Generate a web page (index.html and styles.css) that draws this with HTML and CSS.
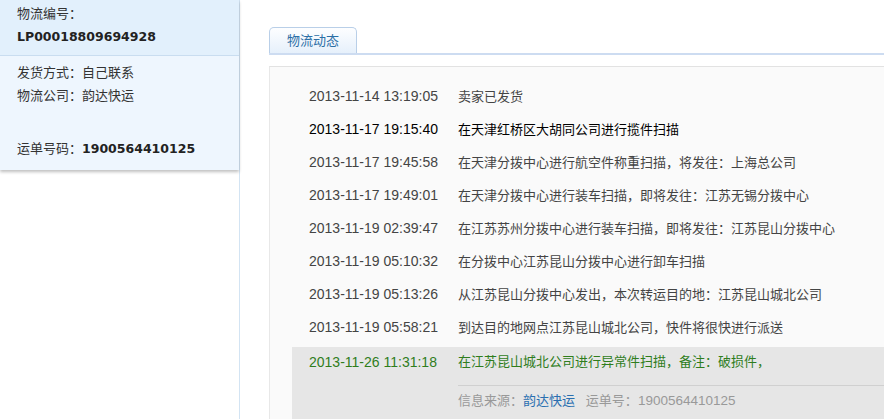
FILE: index.html
```html
<!DOCTYPE html>
<html lang="zh-CN">
<head>
    <meta charset="UTF-8">
    <meta name="viewport" content="width=device-width, initial-scale=1.0">
    <title>物流详情</title>
    <link rel="stylesheet" href="styles.css">
</head>
<body>
    <div class="page">
        <div class="sidebar">
            <div class="info-box">
                <div class="info-head">
                    <div>物流编号：</div>
                    <div class="num">LP00018809694928</div>
                </div>
                <div class="info-body">
                    <div>发货方式：自己联系</div>
                    <div>物流公司：韵达快运</div>
                    <div class="blank"></div>
                    <div class="waybill">运单号码：<span class="num">1900564410125</span></div>
                </div>
            </div>
        </div>

        <div class="main">
            <div class="tabs">
                <span class="tab">物流动态</span>
            </div>
            <div class="panel">
                <ul class="trace">
                    <li><span class="time">2013-11-14 13:19:05</span><span class="desc">卖家已发货</span></li>
                    <li class="dark"><span class="time">2013-11-17 19:15:40</span><span class="desc">在天津红桥区大胡同公司进行揽件扫描</span></li>
                    <li><span class="time">2013-11-17 19:45:58</span><span class="desc">在天津分拨中心进行航空件称重扫描，将发往：上海总公司</span></li>
                    <li><span class="time">2013-11-17 19:49:01</span><span class="desc">在天津分拨中心进行装车扫描，即将发往：江苏无锡分拨中心</span></li>
                    <li><span class="time">2013-11-19 02:39:47</span><span class="desc">在江苏苏州分拨中心进行装车扫描，即将发往：江苏昆山分拨中心</span></li>
                    <li><span class="time">2013-11-19 05:10:32</span><span class="desc">在分拨中心江苏昆山分拨中心进行卸车扫描</span></li>
                    <li><span class="time">2013-11-19 05:13:26</span><span class="desc">从江苏昆山分拨中心发出，本次转运目的地：江苏昆山城北公司</span></li>
                    <li><span class="time">2013-11-19 05:58:21</span><span class="desc">到达目的地网点江苏昆山城北公司，快件将很快进行派送</span></li>
                </ul>
                <div class="latest">
                    <div class="latest-row"><span class="time">2013-11-26 11:31:18</span><span class="desc">在江苏昆山城北公司进行异常件扫描，备注：破损件，</span></div>
                    <div class="source">信息来源：<a href="#">韵达快运</a>&nbsp;&nbsp;&nbsp;运单号：<span class="plain">1900564410125</span></div>
                </div>
            </div>
        </div>
    </div>
</body>
</html>
```

FILE: styles.css
```css
html, body {
    margin: 0;
    height: 100%;
}
body {
    font-family: "Liberation Sans", "Noto Sans CJK SC", sans-serif;
    font-size: 13px;
    color: #333;
    background-color: #fff;
    overflow: hidden;
}
.page {
    display: flex;
    height: 100%;
}
.sidebar {
    width: 239px;
    border-right: 1px solid #d3e4f3;
    flex-shrink: 0;
}
.info-box {
    box-shadow: 0 2px 3px rgba(0, 0, 0, 0.25);
    line-height: 23px;
}
.info-head {
    background-color: #e2f0fc;
    padding: 2px 0 7px 17px;
    border-bottom: 1px solid #c9ddf0;
}
.info-body {
    background-color: #eef6fe;
    padding: 5px 0 10px 17px;
}
.blank {
    height: 23px;
}
.waybill {
    margin-top: 7px;
}
.num {
    font-family: "DejaVu Sans", sans-serif;
    font-weight: bold;
    font-size: 12.5px;
    color: #222;
}
.main {
    flex: 1;
    padding: 27px 0 0 29px;
    display: flex;
    flex-direction: column;
}
.tabs {
    border-bottom: 2px solid #cddcf1;
    height: 26px;
}
.tab {
    display: inline-block;
    box-sizing: border-box;
    width: 88px;
    height: 26px;
    line-height: 25px;
    text-align: center;
    color: #2c6fa6;
    border: 1px solid #b9cfe8;
    border-bottom: none;
    border-radius: 5px 5px 0 0;
    background: linear-gradient(#fdfeff, #e6f0fb);
}
.panel {
    flex: 1;
    margin-top: 11px;
    background-color: #fafafa;
    border-top: 1px solid #e2e2e2;
    border-left: 1px solid #e8e8e8;
    display: flex;
    flex-direction: column;
}
.trace {
    list-style: none;
    margin: 0;
    padding: 13px 0 0 39px;
}
.trace li,
.latest-row {
    display: flex;
    line-height: 33px;
    color: #444;
}
.time {
    width: 149px;
    flex-shrink: 0;
    font-size: 14px;
}
.trace li.dark {
    color: #000;
}
.latest {
    flex: 1;
    margin: 3px 0 0 22px;
    padding-left: 17px;
    background-color: #e6e6e6;
}
.latest-row {
    line-height: 30px;
    color: #2f7d1c;
    padding-bottom: 8px;
}
.source {
    margin-left: 149px;
    border-top: 1px solid #d0d0d0;
    line-height: 30px;
    color: #999;
}
.source .plain {
    font-size: 13.5px;
}
.source a {
    color: #2a6fb0;
    text-decoration: none;
}
```
